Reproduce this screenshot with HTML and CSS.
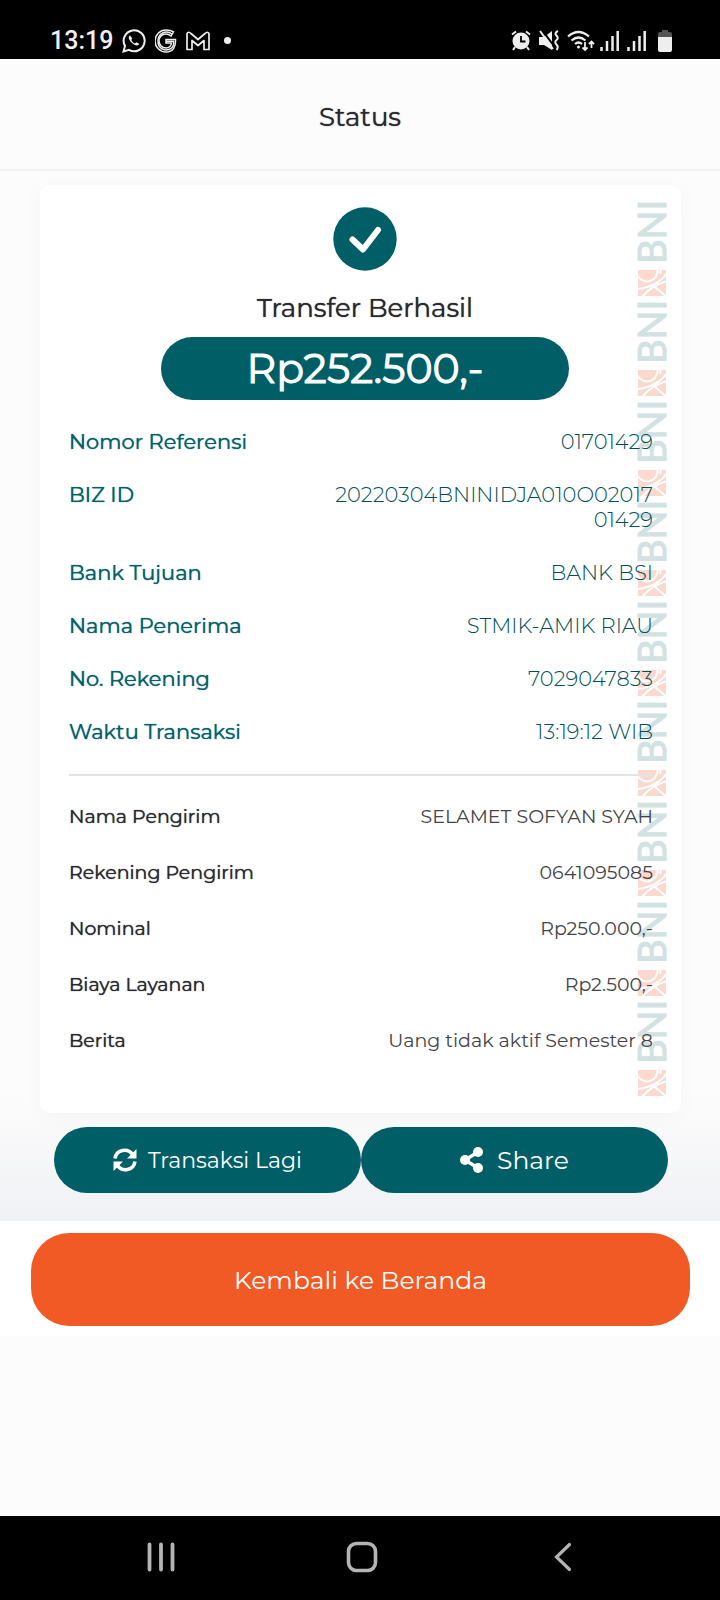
FILE: index.html
```html
<!DOCTYPE html>
<html lang="id">
<head>
<meta charset="utf-8">
<meta name="viewport" content="width=device-width, initial-scale=1">
<title>Status</title>
<link rel="stylesheet" href="styles.css">
</head>
<body>
<svg class="defs" aria-hidden="true">
  <symbol id="bni" viewBox="0 0 30 100">
    <text class="mark-text" transform="translate(29 63) rotate(-90)">BNI</text>
    <g>
      <rect class="mark-box" x="1" y="69" width="28" height="26"/>
      <path class="mark-line" d="M0 74q5 8 13 6q7-2 8-12M0 88Q20 86 30 72M5 96Q14 85 30 80M18 86l12 10M24 68l-1 5"/>
    </g>
  </symbol>
</svg>
<div class="screen">
  <div class="statusbar">
    <div class="status-left">
      <span class="clock">13:19</span>
      <svg width="24" height="24" viewBox="0 0 24 24" fill="none" stroke="#eee" stroke-width="2"><path d="M1.500 22.500l1.500-5.600a10.500 10.500 0 1 1 4 4z"/><path d="M8 6.500c-2 1-1.500 4 1.500 7s6.500 4 7.800 1.600l-2.800-1.800-1.600 1.200c-1.500-.7-3-2.200-3.600-3.600l1-1.500z" fill="#eee" stroke="none"/></svg>
      <svg width="22" height="24" viewBox="0 0 22 24" fill="none" stroke="#eee" stroke-width="1.500"><path d="M18.500 2.800C16 1 13.500 1 11 1A11 11 0 0 0 11 23C18 23 21 18 20.500 10.500H11V14H16.500C16 17.500 13.500 19 11 19A7 7 0 0 1 11 5C13 5 14.500 5.700 16 7z"/><path d="M17 5C11 .5 3 4.500 3 12s6 10 11 8.500S19 15 18.500 12.200H11"/></svg>
      <svg width="24" height="20" viewBox="0 0 24 20" fill="none" stroke="#eee" stroke-width="1.700" stroke-linejoin="round"><path d="M1 18.500V2.500q1.500-2.500 4 0l7 6 7-6q2.500-2.500 4 0v16h-5V9.500l-6 5-6-5v9z"/></svg>
      <span class="dot"></span>
    </div>
    <div class="status-right">
      <svg width="20" height="21" viewBox="0 0 20 21"><circle cx="10" cy="11" r="8.500" fill="#eee"/><path d="M1 4.500l4-3M19 4.500l-4-3M4 17l-2 3M16 17l2 3" stroke="#eee" stroke-width="2"/><path d="M10 6v5.500h4.500" fill="none" stroke="#000" stroke-width="1.800"/></svg>
      <svg width="20" height="21" viewBox="0 0 20 21"><path d="M0 7h5L13 1v19l-8-5H0z" fill="#eee"/><path d="M3 0l12 16" stroke="#000" stroke-width="2"/><path d="M1 1l13 18" stroke="#eee" stroke-width="2"/><path d="M19 1q-4 2-1.500 4.500t0 4.500q-2.500 2 0 4.500t0 5.500" fill="none" stroke="#eee" stroke-width="2"/></svg>
      <svg class="wifi" width="28" height="22" viewBox="0 0 28 22" fill="none" stroke="#eee" stroke-width="2.200"><path d="M1 6.500q10.500-9 21 0M4.500 10.500q7-6 14 0M8 14q3.500-3 7 0"/><circle cx="11.500" cy="17" r="1.500" fill="#eee" stroke="none"/><path d="M18 12v8M15.500 17.500l2.500 2.500 2.500-2.500M24.500 18v-7M22 14l2.500-2.500L27 14" stroke-width="1.800"/></svg>
      <svg width="19" height="21" viewBox="0 0 19 21" fill="none" stroke="#eee" stroke-width="2.500"><path d="M1.500 21v-4M7 21V11M12.500 21V6M17.700 21V1"/></svg>
      <svg class="sim" width="19" height="21" viewBox="0 0 19 21" fill="none" stroke="#eee" stroke-width="2.500"><path d="M1.500 21v-4M7 21V11M12.500 21V6M17.700 21V1"/></svg>
      <svg width="14" height="22" viewBox="0 0 14 22"><path d="M4 0h6v2h2q2 0 2 2v3H0V4q0-2 2-2h2z" fill="#555"/><path d="M0 7h14v13q0 2-2 2H2q-2 0-2-2z" fill="#eee"/></svg>
    </div>
  </div>

  <header class="header"><h1>Status</h1></header>

  <main class="main">
    <section class="card">
      <div class="watermark" aria-hidden="true">
        <svg><use href="#bni"/></svg><svg><use href="#bni"/></svg><svg><use href="#bni"/></svg>
        <svg><use href="#bni"/></svg><svg><use href="#bni"/></svg><svg><use href="#bni"/></svg>
        <svg><use href="#bni"/></svg><svg><use href="#bni"/></svg><svg><use href="#bni"/></svg>
      </div>
      <div class="hero">
        <svg width="64" height="64" viewBox="0 0 64 64"><circle cx="32" cy="32" r="31.700" fill="#005e67"/><path d="M19.500 32.500L30 42.500 45 23" fill="none" stroke="#fff" stroke-width="6" stroke-linecap="round" stroke-linejoin="round"/></svg>
        <h2>Transfer Berhasil</h2>
        <p class="amount">Rp252.500,-</p>
      </div>
      <dl class="list primary">
        <div class="row"><dt>Nomor Referensi</dt><dd>01701429</dd></div>
        <div class="row"><dt>BIZ ID</dt><dd>20220304BNINIDJA010O02017<wbr>01429</dd></div>
        <div class="row"><dt>Bank Tujuan</dt><dd>BANK BSI</dd></div>
        <div class="row"><dt>Nama Penerima</dt><dd>STMIK-AMIK RIAU</dd></div>
        <div class="row"><dt>No. Rekening</dt><dd>7029047833</dd></div>
        <div class="row"><dt>Waktu Transaksi</dt><dd>13:19:12 WIB</dd></div>
      </dl>
      <dl class="list secondary">
        <div class="row"><dt>Nama Pengirim</dt><dd>SELAMET SOFYAN SYAH</dd></div>
        <div class="row"><dt>Rekening Pengirim</dt><dd>0641095085</dd></div>
        <div class="row"><dt>Nominal</dt><dd>Rp250.000,-</dd></div>
        <div class="row"><dt>Biaya Layanan</dt><dd>Rp2.500,-</dd></div>
        <div class="row"><dt>Berita</dt><dd>Uang tidak aktif Semester 8</dd></div>
      </dl>
    </section>
    <div class="actions">
      <button type="button" class="btn">
        <svg width="24" height="24" viewBox="0 0 24 24" fill="none" stroke="#fff" stroke-width="3.600"><path d="M2 10.500C3.500 1 15 0 19.500 6.500M22 13.500C20.500 23 9 24 4.500 17.500"/><path d="M23.500 1v9.500H14zM.5 23v-9.500H10z" fill="#fff" stroke="none"/></svg>
        <span>Transaksi Lagi</span>
      </button>
      <button type="button" class="btn share">
        <svg width="24" height="26" viewBox="0 0 24 26"><path d="M18 5L5 13l13 8" fill="none" stroke="#fff" stroke-width="3.400"/><circle cx="18" cy="5" r="5" fill="#fff"/><circle cx="5" cy="13" r="5" fill="#fff"/><circle cx="18" cy="21" r="5" fill="#fff"/></svg>
        <span>Share</span>
      </button>
    </div>
  </main>

  <footer class="footer"><button type="button" class="home-btn">Kembali ke Beranda</button></footer>

  <nav class="navbar">
    <button type="button" aria-label="Recents"><svg width="28" height="30" viewBox="0 0 28 30" stroke="#b4b4b4" stroke-width="3.800" stroke-linecap="round"><path d="M2.500 2.500v25M14 2.500v25M25.500 2.500v25"/></svg></button>
    <button type="button" aria-label="Home"><svg width="32" height="32" viewBox="0 0 32 32"><rect x="2.500" y="2.500" width="27" height="27" rx="8" fill="none" stroke="#b4b4b4" stroke-width="3.600"/></svg></button>
    <button type="button" aria-label="Back"><svg width="18" height="30" viewBox="0 0 18 30"><path d="M15.500 2.500L2.500 15l13 12.500" fill="none" stroke="#b4b4b4" stroke-width="3.200" stroke-linecap="round"/></svg></button>
  </nav>
</div>
</body>
</html>
```
FILE: styles.css
```css
* { box-sizing: border-box; }
body { margin: 0; font-family: Montserrat, Inter, "Liberation Sans", sans-serif; color: #2a292e; background: #fcfcfc; }
h1, h2, p, dl, dt, dd { margin: 0; font-weight: 400; }
h1, h2, dt { text-shadow: 0 0 1px currentColor; }
.amount { -webkit-text-stroke: 1px currentColor; }
button { border: 0; padding: 0; background: none; font: inherit; color: inherit; }
svg { flex: none; display: block; }
.defs { display: none; }
.screen { min-height: 100vh; display: flex; flex-direction: column; }

.statusbar { height: 59px; padding: 22px 48px 0 50px; background: #000; display: flex; justify-content: space-between; }
.status-left, .status-right { display: flex; align-items: center; height: 37px; }
.status-left { gap: 9px; }
.status-right { gap: 8px; }
.wifi { margin-right: -3px; }
.sim { margin-right: 4px; }
.clock { font-family: Roboto, sans-serif; font-size: 25px; line-height: 36px; font-weight: 500; color: #f0f0f0; }
.dot { width: 7px; height: 7px; border-radius: 50%; background: #eee; margin-left: 5px; }

.header { padding: 42px 0 36px; border-bottom: 2px solid #f3f3f3; text-align: center; }
.header h1 { font-size: 26px; line-height: 32px; }

.main { padding: 14px 39px 28px 40px; background: linear-gradient(to bottom, #fcfcfc 88%, #f0f1f5); }
.card { position: relative; padding: 22px 28px 60px 29px; border-radius: 10px; background: #fff; box-shadow: 0 2px 22px rgba(0, 0, 0, 0.03); }
.watermark { position: absolute; top: 16px; right: 14px; }
.watermark svg { width: 30px; height: 100px; }
.mark-text { font: 38px Lato, sans-serif; fill: #d2e2e3; stroke: #d2e2e3; stroke-width: 1px; }
.mark-box { fill: #fcd9ce; }
.mark-line { fill: none; stroke: #fff; stroke-width: 2; }

.hero { position: relative; display: flex; flex-direction: column; align-items: center; padding-left: 8px; }
.hero h2 { margin-top: 20px; font-size: 26px; line-height: 34px; }
.amount { margin-top: 12px; width: 71%; border-radius: 32px; background: #005e67; color: #fff; font-size: 41px; line-height: 63px; text-align: center; }

.list { position: relative; display: flex; flex-direction: column; }
.row { display: flex; justify-content: space-between; }
.row dd { max-width: 320px; text-align: right; }
.primary { gap: 28px; padding: 29px 0 30px; color: #085f68; font-size: 21px; line-height: 25px; border-bottom: 2px solid #e2e2e4; }
.primary dt { font-size: 21px; }
.primary dd { font-weight: 300; color: #004f58; }
.secondary { gap: 32px; padding-top: 29px; font-size: 19px; line-height: 24px; }
.secondary dd { color: #444448; }

.actions { display: flex; padding: 14px 13px 0 14px; }
.btn { flex: 1; height: 66px; border-radius: 33px; background: #005e67; color: #fff; display: flex; align-items: center; justify-content: center; gap: 11px; font-size: 22px; }
.share { gap: 13px; font-size: 25px; }

.footer { padding: 12px 30px 10px 31px; background: #fff; }
.home-btn { display: block; width: 100%; height: 93px; border-radius: 38px; background: #f15a24; color: #fff; font-size: 25px; }

.navbar { margin-top: auto; height: 84px; padding: 0 56px 2px 60px; background: #000; display: flex; }
.navbar button { flex: 1; display: flex; align-items: center; justify-content: center; }
```
